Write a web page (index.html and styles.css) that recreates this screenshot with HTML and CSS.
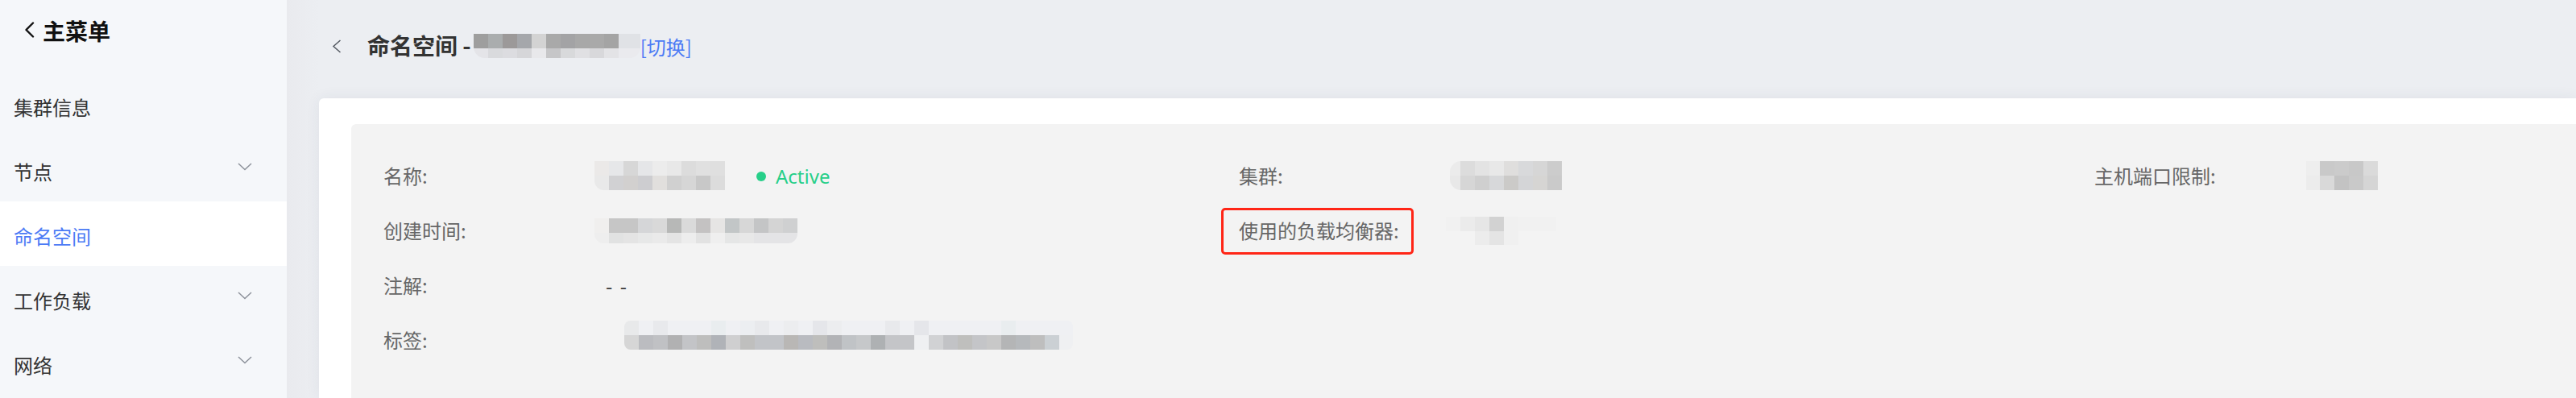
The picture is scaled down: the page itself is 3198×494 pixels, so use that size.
FILE: index.html
```html
<!DOCTYPE html>
<html lang="zh-CN">
<head>
<meta charset="utf-8">
<title>命名空间</title>
<link rel="stylesheet" href="styles.css">
</head>
<body>
<div class="app">
  <aside class="sidebar">
    <div class="side-head">
      <svg class="side-back" width="13" height="20" viewBox="0 0 13 20"><polyline points="11,1.5 2.5,10 11,18.5" fill="none" stroke="#111" stroke-width="2.4" stroke-linecap="round" stroke-linejoin="round"/></svg>
      <span class="side-title">主菜单</span>
    </div>
    <nav class="menu">
      <div class="menu-item"><span>集群信息</span></div>
      <div class="menu-item"><span>节点</span><svg class="caret" width="18" height="10" viewBox="0 0 18 10"><polyline points="1,1 9,8.5 17,1" fill="none" stroke="#8d929b" stroke-width="1.5"/></svg></div>
      <div class="menu-item active"><span>命名空间</span></div>
      <div class="menu-item"><span>工作负载</span><svg class="caret" width="18" height="10" viewBox="0 0 18 10"><polyline points="1,1 9,8.5 17,1" fill="none" stroke="#8d929b" stroke-width="1.5"/></svg></div>
      <div class="menu-item"><span>网络</span><svg class="caret" width="18" height="10" viewBox="0 0 18 10"><polyline points="1,1 9,8.5 17,1" fill="none" stroke="#8d929b" stroke-width="1.5"/></svg></div>
    </nav>
  </aside>
  <main class="main">
    <header class="page-head">
      <svg class="page-back" width="12" height="17" viewBox="0 0 12 17"><polyline points="10.5,1 2,8.5 10.5,16" fill="none" stroke="#555a63" stroke-width="1.5"/></svg>
      <h1 class="page-title">命名空间 -</h1>
      <span class="mosaic mz-head"></span>
      <a class="switch">[切换]</a>
    </header>
    <section class="card">
      <div class="panel">
        <div class="col">
          <div class="row"><span class="label">名称:</span><span class="mosaic mz-name"></span><span class="status"><i class="dot"></i>Active</span></div>
          <div class="row"><span class="label">创建时间:</span><span class="mosaic mz-time"></span></div>
          <div class="row"><span class="label">注解:</span><span class="value dash">- -</span></div>
          <div class="row"><span class="label">标签:</span><span class="mosaic mz-tags"></span></div>
        </div>
        <div class="col">
          <div class="row"><span class="label">集群:</span><span class="mosaic mz-cluster"></span></div>
          <div class="row"><span class="label"><span class="marked">使用的负载均衡器:</span></span><span class="mosaic mz-lb"></span></div>
        </div>
        <div class="col">
          <div class="row"><span class="label">主机端口限制:</span><span class="mosaic mz-port"></span></div>
        </div>
      </div>
    </section>
  </main>
</div>
</body>
</html>
```

FILE: styles.css
```css
* { box-sizing: border-box; }
html, body { margin: 0; padding: 0; }
body {
  width: 3198px;
  height: 494px;
  overflow: hidden;
  font-family: "Noto Sans", "Noto Sans CJK SC", sans-serif;
  color: #333;
  background: #eef0f4;
}
.app { display: flex; height: 494px; }

/* sidebar */
.sidebar {
  width: 356px;
  flex-shrink: 0;
  background: #f5f7fa;
  display: flex;
  flex-direction: column;
}
.side-head {
  height: 90px;
  display: flex;
  align-items: flex-start;
  padding: 18px 0 0 30px;
}
.side-back { margin: 9px 10px 0 0; }
.side-title {
  font-family: "Noto Sans CJK SC", sans-serif;
  font-size: 28px;
  font-weight: 700;
  line-height: 40px;
  color: #111;
}
.menu { display: flex; flex-direction: column; }
.menu-item {
  height: 80px;
  display: flex;
  align-items: center;
  justify-content: space-between;
  padding: 4px 43px 0 17px;
  font-family: "Noto Sans CJK SC", sans-serif;
  font-size: 24px;
  color: #333;
}
.menu-item .caret { margin-bottom: 10px; }
.menu-item.active { background: #fff; color: #4c7bf5; }

/* main */
.main {
  flex: 1;
  min-width: 0;
  overflow: hidden;
  display: flex;
  flex-direction: column;
  background: linear-gradient(to right, #e9eaee 0, #eceef2 40px);
}
.page-head {
  height: 112px;
  flex-shrink: 0;
  display: flex;
  align-items: center;
  padding-left: 56px;
}
.page-back { margin-right: 32px; margin-top: 2px; }
.page-title {
  margin: 0;
  font-family: "Noto Sans CJK SC", sans-serif;
  font-size: 28px;
  font-weight: 700;
  color: #333;
  white-space: pre;
}
.switch {
  font-family: "Noto Sans CJK SC", sans-serif;
  font-size: 24px;
  color: #4c7bf5;
  margin-top: 2px;
}

.card {
  margin: 10px 0 0 40px;
  flex: 1;
  background: #fff;
  border-radius: 6px 0 0 0;
  box-shadow: 0 0 18px rgba(40, 50, 80, 0.07);
  padding: 32px 0 0 40px;
  display: flex;
}
.panel {
  flex: 1;
  background: #f3f3f3;
  border-radius: 6px 0 0 0;
  padding: 30px 0 0 40px;
  display: flex;
  align-items: flex-start;
}
.col {
  width: 1062px;
  flex-shrink: 0;
  display: flex;
  flex-direction: column;
}
.row {
  height: 68px;
  display: flex;
  align-items: center;
  font-family: "Noto Sans CJK SC", sans-serif;
  font-size: 24px;
}
.label {
  width: 262px;
  flex-shrink: 0;
  color: #666;
  line-height: 34px;
}
.value { color: #333; }
.dash { padding-left: 14px; letter-spacing: 2px; }
.marked { position: relative; display: inline-block; }
.marked::after {
  content: "";
  position: absolute;
  left: -22px;
  right: -18px;
  top: -11px;
  bottom: -13px;
  border: 3px solid #ff2516;
  border-radius: 5px;
}
.status {
  display: flex;
  align-items: center;
  font-family: "Noto Sans", sans-serif;
  color: #27cf89;
  font-size: 24px;
}
.dot {
  width: 12px;
  height: 12px;
  border-radius: 50%;
  background: #27cf89;
  margin: 2px 12px 0 39px;
}

/* pixelated (blurred) values */
.mosaic {
  display: inline-block;
  flex-shrink: 0;
  background-repeat: no-repeat;
}
.mz-head {
  width: 207px;
  height: 30px;
  margin: 2px 0 0 3px;
  background-image:
    linear-gradient(to right, #9e9e9e 0 18px, #aaadae 18px 36px, #9c9999 36px 54px, #a5a7ab 54px 72px, #d3d3d3 72px 90px, #a9a9a9 90px 108px, #a3a3a5 108px 126px, #a8a8a8 126px 144px, #a9a9a9 144px 162px, #a4a4a4 162px 180px, #e0e2e6 180px 207px),
    linear-gradient(to right, #e4e4e8 0 18px, #d9dadd 18px 36px, #dcdce0 36px 54px, #d6d6d9 54px 72px, #e8e8eb 72px 90px, #c6c6c8 90px 108px, #d8d9db 108px 126px, #e0e0e3 126px 144px, #d8d8db 144px 162px, #e3e3e6 162px 180px, #eaeaee 180px 207px);
  background-size: 100% 18px, 100% 12px;
  background-position: top left, bottom left;
  border-radius: 0 0 14px 14px;
}
.mz-name {
  width: 162px;
  height: 36px;
  background-image:
    linear-gradient(to right, #ebe9e8 0 18px, #e6e7e9 18px 36px, #d7d7d7 36px 54px, #e5e6e8 54px 72px, #ececec 72px 90px, #e8e8e8 90px 108px, #dcdcdc 108px 126px, #e0e0e0 126px 144px, #dfdfdf 144px 162px),
    linear-gradient(to right, #e9e9e9 0 18px, #d1d1d3 18px 36px, #d2d0cf 36px 54px, #cdcdd0 54px 72px, #e1dfdd 72px 90px, #d0d0d0 90px 108px, #d6d6d6 108px 126px, #c8c8c8 126px 144px, #dcdcdc 144px 162px);
  background-size: 100% 18px, 100% 18px;
  background-position: top left, bottom left;
  border-radius: 0 0 0 12px;
}
.mz-time {
  width: 252px;
  height: 31px;
  background-image:
    linear-gradient(to right, #f0efee 0 18px, #c6c6c6 18px 54px, #d5d6d8 54px 72px, #d9d9d9 72px 90px, #b7b8b7 90px 108px, #dadada 108px 126px, #c4c2c2 126px 144px, #e6e5e4 144px 162px, #c2c6c7 162px 180px, #d7d7d7 180px 198px, #c4c5c6 198px 216px, #d4d4d4 216px 234px, #cfd0d1 234px 252px),
    linear-gradient(to right, #eeeeee 0 18px, #e1e2e2 18px 36px, #e4e4e4 36px 54px, #e7e8e8 54px 72px, #eaeaea 72px 90px, #e4e4e4 90px 108px, #ededed 108px 126px, #e2e2e2 126px 144px, #efefef 144px 162px, #e5e6e6 162px 180px, #e8e8e8 180px 198px, #e4e4e6 198px 252px);
  background-size: 100% 18px, 100% 13px;
  background-position: top left, bottom left;
  border-radius: 0 0 12px 12px;
}
.mz-tags {
  width: 557px;
  height: 36px;
  margin: 0 0 12px 37px;
  background-image:
    linear-gradient(to right, #e8e9ea 0 18px, #eff0f3 18px 36px, #e8e9ec 36px 54px, #eff0f3 54px 108px, #e9edef 108px 126px, #eff0f3 126px 144px, #eceef1 144px 162px, #e8e9ec 162px 180px, #eff0f3 180px 198px, #ecedef 198px 216px, #eff0f3 216px 234px, #e5e6ea 234px 252px, #ecedef 252px 270px, #eff0f3 270px 324px, #e8e9ec 324px 342px, #eff0f3 342px 360px, #e5e6ea 360px 378px, #eff0f3 378px 468px, #e9edef 468px 486px, #eff0f3 486px 557px),
    linear-gradient(to right, #d6d6d6 0 18px, #bbbcc0 18px 36px, #c0c1c4 36px 54px, #b1b1b2 54px 72px, #c3c4c7 72px 90px, #bebebd 90px 108px, #b0b3b8 108px 126px, #cfcfd0 126px 144px, #bfbfbe 144px 162px, #c2c4c8 162px 198px, #b9b7b5 198px 216px, #b9bbc0 216px 234px, #bebebc 234px 252px, #b2b3b6 252px 270px, #c0c3c6 270px 288px, #c6c8ca 288px 306px, #aeb1b3 306px 324px, #c4c5c8 324px 360px, #eff0f2 360px 378px, #d1d2d4 378px 396px, #c2c3c6 396px 414px, #bfbfbd 414px 432px, #c4c5c8 432px 450px, #c8c8c8 450px 468px, #b4b5b6 468px 486px, #b6b9bc 486px 504px, #bebebe 504px 522px, #cbd0d4 522px 540px, #eff0f2 540px 557px);
  background-size: 100% 18px, 100% 18px;
  background-position: top left, bottom left;
  border-radius: 8px;
}
.mz-cluster {
  width: 139px;
  height: 36px;
  background-image:
    linear-gradient(to right, #ebebeb 0 13px, #dcdcdc 13px 31px, #e3e3e3 31px 49px, #e8e8e8 49px 67px, #dfdedd 67px 85px, #d8d9db 85px 103px, #d6d6d6 103px 121px, #cccccc 121px 139px),
    linear-gradient(to right, #e8e8e8 0 13px, #d6d6d6 13px 31px, #cfcfcf 31px 49px, #d7d8da 49px 67px, #cbcac8 67px 85px, #d4d5d7 85px 103px, #d6d5d3 103px 121px, #cacaca 121px 139px);
  background-size: 100% 18px, 100% 18px;
  background-position: top left, bottom left;
  border-radius: 14px 0 0 14px;
}
.mz-lb {
  width: 137px;
  height: 35px;
  margin-left: -5px;
  background-image:
    linear-gradient(to right, #f1f1f1 0 18px, #ebebeb 18px 36px, #e6e6e6 36px 54px, #d2d2d2 54px 72px, #f0f0f0 72px 90px, #f1f1f1 90px 137px),
    linear-gradient(to right, #f3f3f3 0 36px, #ececec 36px 54px, #e4e4e4 54px 72px, #f0f0f0 72px 90px, #f3f3f3 90px 137px);
  background-size: 100% 18px, 100% 17px;
  background-position: top left, bottom left;
}
.mz-port {
  width: 89px;
  height: 36px;
  margin-left: 1px;
  background-image:
    linear-gradient(to right, #eeeeee 0 17px, #c9c9c9 17px 35px, #cbcbcb 35px 53px, #c8c8c8 53px 71px, #dadada 71px 89px),
    linear-gradient(to right, #ececec 0 17px, #d9d9d9 17px 35px, #c3c3c3 35px 53px, #c9c9c9 53px 71px, #d5d5d5 71px 89px);
  background-size: 100% 18px, 100% 18px;
  background-position: top left, bottom left;
}
```
